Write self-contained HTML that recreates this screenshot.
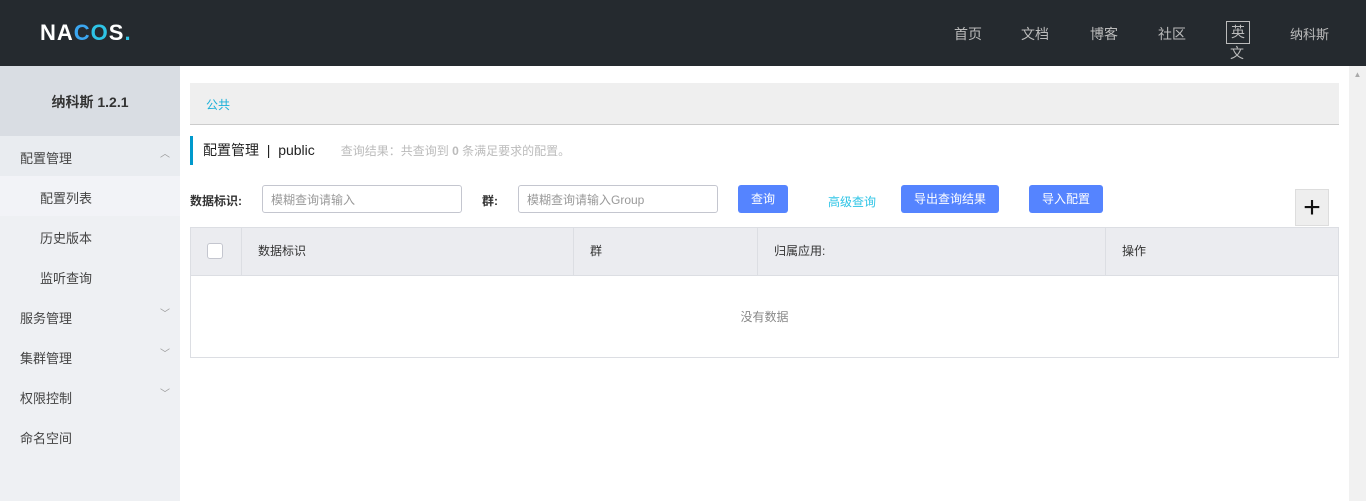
<!DOCTYPE html>
<html><head><meta charset="utf-8"><style>
*{margin:0;padding:0;box-sizing:border-box}
body{width:1366px;height:501px;overflow:hidden;font-family:"Liberation Sans","Noto Sans CJK SC",sans-serif;font-size:12px;color:#333;background:#fff;position:relative}
.hdr{position:absolute;left:0;top:0;width:1366px;height:66px;background:#252a2f}
.logo{position:absolute;left:40px;top:20px;color:#fff;font-size:22px;font-weight:bold;letter-spacing:1px}
.nav{position:absolute;top:24px;color:#bbb;font-size:14px}
.side{position:absolute;left:0;top:66px;width:180px;height:435px;background:#eef0f3}
.ver{height:70px;background:#d9dde3;text-align:center;line-height:72px;font-weight:bold;font-size:14px;color:#333}
.mi{height:40px;line-height:46px;padding-left:20px;font-size:13px;color:#444;position:relative}
.sub{padding-left:40px}
.arr{position:absolute;right:10px;top:-4px;color:#999;font-size:10px}
.sb{position:absolute;left:1349px;top:66px;width:17px;height:435px;background:#f1f1f1}
.bc{position:absolute;left:190px;top:83px;width:1149px;height:42px;background:#efefef;border-bottom:1px solid #ccc;color:#1ab0d9;line-height:44px;padding-left:16px;font-size:12px}
.title{position:absolute;left:190px;top:136px;height:29px;border-left:3px solid #09c;padding-left:10px;line-height:29px;font-size:14px;color:#222}
.title span{font-size:12px;color:#bbb;margin-left:26px}
.lbl{position:absolute;top:192px;font-weight:bold;font-size:12px;color:#333}
.inp{position:absolute;top:185px;height:28px;border:1px solid #c4c6cf;border-radius:3px;color:#999;line-height:28px;padding-left:8px;font-size:12px}
.btn{position:absolute;top:185px;height:28px;background:#5584ff;color:#fff;border-radius:3px;text-align:center;line-height:29px;font-size:12px}
.tbl{position:absolute;left:190px;top:227px;width:1149px;height:131px;border:1px solid #dcdee3}
.th{height:48px;background:#ebecf0;border-bottom:1px solid #dcdee3;position:relative}
.th div{position:absolute;top:0;height:47px;line-height:47px;border-left:1px solid #dcdee3;padding-left:16px;font-size:12px}
</style></head><body>
<div class="hdr">
<div class="logo">NA<span style="color:#3ba6f0">C</span><span style="color:#2ec4e6">O</span>S<span style="color:#2ec4e6">.</span></div>
<div class="nav" style="left:954px">首页</div>
<div class="nav" style="left:1021px">文档</div>
<div class="nav" style="left:1090px">博客</div>
<div class="nav" style="left:1158px">社区</div>
<div class="nav" style="left:1226px;top:21px;width:24px;height:23px;border:1px solid #bbb;text-align:center;line-height:20px">英</div>
<div class="nav" style="left:1230px;top:43px">文</div>
<div class="nav" style="left:1290px;font-size:13px">纳科斯</div>
</div>
<div class="side">
<div class="ver">纳科斯 1.2.1</div>
<div class="mi" style="background:#e9ecf0">配置管理<span class="arr">︿</span></div>
<div class="mi sub" style="background:#f2f3f7">配置列表</div>
<div class="mi sub">历史版本</div>
<div class="mi sub">监听查询</div>
<div class="mi">服务管理<span class="arr">﹀</span></div>
<div class="mi">集群管理<span class="arr">﹀</span></div>
<div class="mi">权限控制<span class="arr">﹀</span></div>
<div class="mi">命名空间</div>
</div>
<div class="sb"><div style="color:#aaa;font-size:8px;text-align:center;margin-top:4px">▲</div></div>
<div class="bc">公共</div>
<div class="title">配置管理 &nbsp;| &nbsp;public<span>查询结果：共查询到 <b>0</b> 条满足要求的配置。</span></div>
<div class="lbl" style="left:190px">数据标识:</div>
<div class="inp" style="left:262px;width:200px">模糊查询请输入</div>
<div class="lbl" style="left:482px">群:</div>
<div class="inp" style="left:518px;width:200px">模糊查询请输入Group</div>
<div class="btn" style="left:738px;width:50px">查询</div>
<div style="position:absolute;left:828px;top:193px;color:#2ec4e6">高级查询</div>
<div class="btn" style="left:901px;width:98px">导出查询结果</div>
<div class="btn" style="left:1029px;width:74px">导入配置</div>
<div style="position:absolute;left:1295px;top:189px;width:34px;height:37px;background:#eee;border:1px solid #ddd;text-align:center;line-height:35px;font-size:30px;color:#111">+</div>
<div class="tbl">
<div class="th">
<span style="position:absolute;left:16px;top:15px;width:16px;height:16px;border:1px solid #c4c6cf;border-radius:3px;background:#fff"></span>
<div style="left:50px">数据标识</div>
<div style="left:382px">群</div>
<div style="left:566px">归属应用:</div>
<div style="left:914px">操作</div>
</div>
<div style="text-align:center;line-height:82px;color:#888">没有数据</div>
</div>
</body></html>
